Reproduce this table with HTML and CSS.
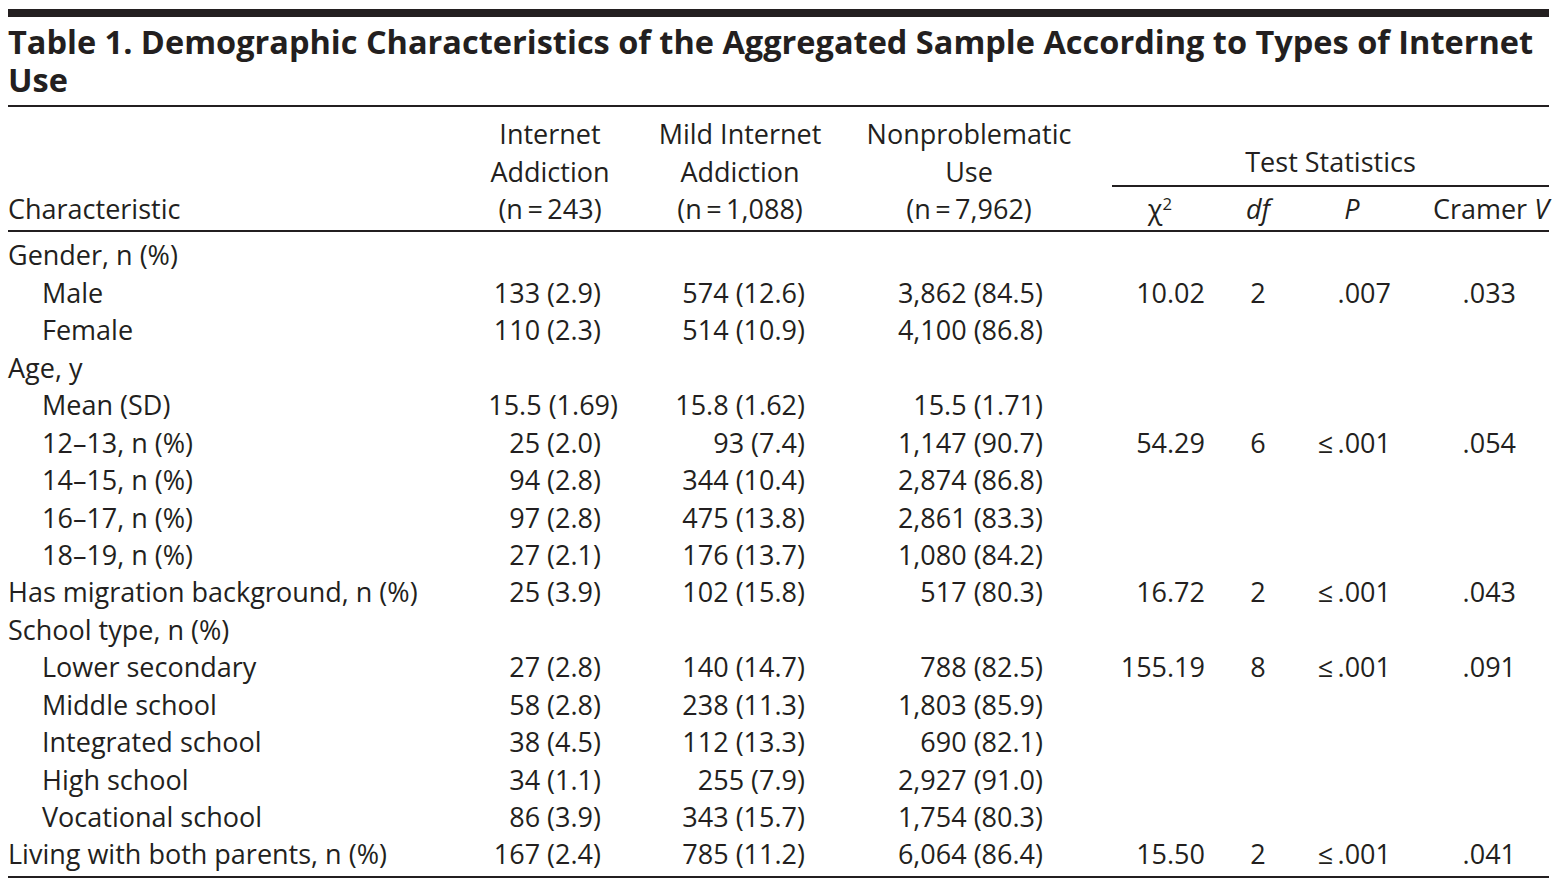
FILE: index.html
```html
<!DOCTYPE html>
<html lang="en">
<head>
<meta charset="utf-8">
<title>Table 1</title>
<link rel="stylesheet" href="styles.css">
</head>
<body>
<div class="wrap">
  <div class="title">Table 1. Demographic Characteristics of the Aggregated Sample According to Types of Internet Use</div>
  <table class="data">
    <colgroup>
      <col class="w1"><col class="w2"><col class="w3"><col class="w4">
      <col class="w5"><col class="w6"><col class="w7"><col class="w8">
    </colgroup>
    <thead>
      <tr>
        <th rowspan="2" class="h-char">Characteristic</th>
        <th rowspan="2" class="h-grp">Internet<br>Addiction<br>(n&#8201;=&#8201;243)</th>
        <th rowspan="2" class="h-grp">Mild Internet<br>Addiction<br>(n&#8201;=&#8201;1,088)</th>
        <th rowspan="2" class="h-grp h-non">Nonproblematic<br>Use<br>(n&#8201;=&#8201;7,962)</th>
        <th colspan="4" class="h-span">Test Statistics</th>
      </tr>
      <tr class="h-sub">
        <th class="h-chi">&chi;<sup>2</sup></th>
        <th class="h-df"><i>df</i></th>
        <th class="h-p"><i>P</i></th>
        <th class="h-v">Cramer <i>V</i></th>
      </tr>
    </thead>
    <tbody>
      <tr class="first"><td class="lbl">Gender, n (%)</td><td></td><td></td><td></td><td></td><td></td><td></td><td></td></tr>
      <tr><td class="lbl sub">Male</td><td class="c2">133 (2.9)</td><td class="c3">574 (12.6)</td><td class="c4">3,862 (84.5)</td><td class="c5">10.02</td><td class="c6">2</td><td class="c7">.007</td><td class="c8">.033</td></tr>
      <tr><td class="lbl sub">Female</td><td class="c2">110 (2.3)</td><td class="c3">514 (10.9)</td><td class="c4">4,100 (86.8)</td><td></td><td></td><td></td><td></td></tr>
      <tr><td class="lbl">Age, y</td><td></td><td></td><td></td><td></td><td></td><td></td><td></td></tr>
      <tr><td class="lbl sub">Mean (SD)</td><td class="c2 wide">15.5 (1.69)</td><td class="c3">15.8 (1.62)</td><td class="c4">15.5 (1.71)</td><td></td><td></td><td></td><td></td></tr>
      <tr><td class="lbl sub">12–13, n (%)</td><td class="c2">25 (2.0)</td><td class="c3">93 (7.4)</td><td class="c4">1,147 (90.7)</td><td class="c5">54.29</td><td class="c6">6</td><td class="c7">≤&#8201;.001</td><td class="c8">.054</td></tr>
      <tr><td class="lbl sub">14–15, n (%)</td><td class="c2">94 (2.8)</td><td class="c3">344 (10.4)</td><td class="c4">2,874 (86.8)</td><td></td><td></td><td></td><td></td></tr>
      <tr><td class="lbl sub">16–17, n (%)</td><td class="c2">97 (2.8)</td><td class="c3">475 (13.8)</td><td class="c4">2,861 (83.3)</td><td></td><td></td><td></td><td></td></tr>
      <tr><td class="lbl sub">18–19, n (%)</td><td class="c2">27 (2.1)</td><td class="c3">176 (13.7)</td><td class="c4">1,080 (84.2)</td><td></td><td></td><td></td><td></td></tr>
      <tr><td class="lbl">Has migration background, n (%)</td><td class="c2">25 (3.9)</td><td class="c3">102 (15.8)</td><td class="c4">517 (80.3)</td><td class="c5">16.72</td><td class="c6">2</td><td class="c7">≤&#8201;.001</td><td class="c8">.043</td></tr>
      <tr><td class="lbl">School type, n (%)</td><td></td><td></td><td></td><td></td><td></td><td></td><td></td></tr>
      <tr><td class="lbl sub">Lower secondary</td><td class="c2">27 (2.8)</td><td class="c3">140 (14.7)</td><td class="c4">788 (82.5)</td><td class="c5">155.19</td><td class="c6">8</td><td class="c7">≤&#8201;.001</td><td class="c8">.091</td></tr>
      <tr><td class="lbl sub">Middle school</td><td class="c2">58 (2.8)</td><td class="c3">238 (11.3)</td><td class="c4">1,803 (85.9)</td><td></td><td></td><td></td><td></td></tr>
      <tr><td class="lbl sub">Integrated school</td><td class="c2">38 (4.5)</td><td class="c3">112 (13.3)</td><td class="c4">690 (82.1)</td><td></td><td></td><td></td><td></td></tr>
      <tr><td class="lbl sub">High school</td><td class="c2">34 (1.1)</td><td class="c3">255 (7.9)</td><td class="c4">2,927 (91.0)</td><td></td><td></td><td></td><td></td></tr>
      <tr><td class="lbl sub">Vocational school</td><td class="c2">86 (3.9)</td><td class="c3">343 (15.7)</td><td class="c4">1,754 (80.3)</td><td></td><td></td><td></td><td></td></tr>
      <tr class="last"><td class="lbl">Living with both parents, n (%)</td><td class="c2">167 (2.4)</td><td class="c3">785 (11.2)</td><td class="c4">6,064 (86.4)</td><td class="c5">15.50</td><td class="c6">2</td><td class="c7">≤&#8201;.001</td><td class="c8">.041</td></tr>
    </tbody>
  </table>
</div>
</body>
</html>
```

FILE: styles.css
```css
html, body {
  margin: 0;
  padding: 0;
  background: #ffffff;
}

body {
  font-family: "Open Sans", "Noto Sans", "Liberation Sans", sans-serif;
  color: #231f20;
}

.wrap {
  width: 1541px;
  margin: 9px 0 0 8px;
  border-top: 8px solid #231f20;
}

.title {
  font-weight: 700;
  font-size: 32.5px;
  line-height: 37.5px;
  padding: 6px 0 7px 0;
  border-bottom: 2px solid #231f20;
}

.data {
  width: 1541px;
  table-layout: fixed;
  border-collapse: collapse;
  font-size: 27px;
  line-height: 37.44px;
  border-bottom: 2px solid #231f20;
}

.w1 { width: 462px; }
.w2 { width: 160px; }
.w3 { width: 220px; }
.w4 { width: 262px; }
.w5 { width: 96px; }
.w6 { width: 100px; }
.w7 { width: 88px; }
.w8 { width: 153px; }

.data th,
.data td {
  padding: 0;
  font-weight: 400;
  white-space: nowrap;
}

.data thead tr:first-child th {
  padding-top: 5px;
}

.data thead {
  border-bottom: 2px solid #231f20;
}

.h-char {
  text-align: left;
  vertical-align: bottom;
}

.h-grp {
  text-align: center;
  vertical-align: bottom;
}

.data th.h-char,
.data th.h-grp {
  padding-bottom: 3px;
}

.data th.h-non {
  padding-right: 24px;
}

.h-span {
  text-align: center;
  vertical-align: bottom;
  border-bottom: 2px solid #231f20;
  height: 68px;
}

.data th.h-span {
  padding-bottom: 5px;
}

.h-sub th {
  vertical-align: bottom;
}

.data .h-sub th {
  padding-top: 3px;
  padding-bottom: 3px;
}

.h-chi, .h-df, .h-p { text-align: center; }
.h-v { text-align: right; }

sup {
  font-size: 0.62em;
  line-height: 0;
  vertical-align: 0.55em;
}

.data tbody tr.first td { padding-top: 4px; }
.data tbody tr.last td { padding-bottom: 3px; }

.lbl { text-align: left; }
.data td.lbl.sub { padding-left: 34px; }

.c2 { text-align: right; }
.data td.c2 { padding-right: 29px; }
.data td.c2.wide { padding-right: 12px; }
.c3 { text-align: right; }
.data td.c3 { padding-right: 45px; }
.c4 { text-align: right; }
.data td.c4 { padding-right: 69px; }
.c5 { text-align: right; }
.data td.c5 { padding-right: 3px; }
.c6 { text-align: center; }
.c7 { text-align: right; }
.data td.c7 { padding-right: 5px; }
.c8 { text-align: right; }
.data td.c8 { padding-right: 33px; }
```
